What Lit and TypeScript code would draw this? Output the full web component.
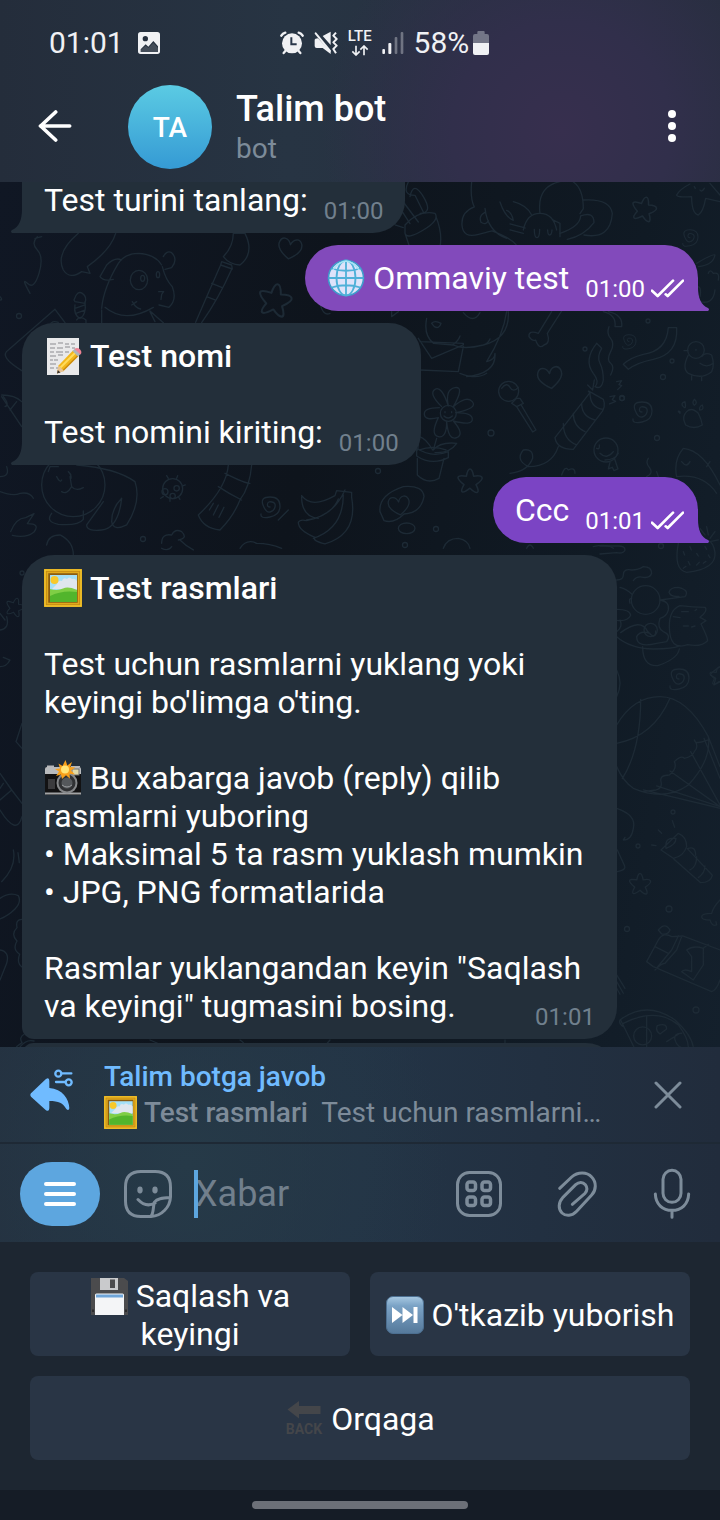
import { LitElement, html, svg, css, nothing } from "lit";
import { customElement, property } from "lit/decorators.js";

/* ---------- emoji artwork ---------- */

const EMOJI: Record<string, unknown> = {
  globe: svg`
    <circle cx="19" cy="19" r="17.500" fill="#dfe3fa" stroke="#3f9ccb" stroke-width="1.600"/>
    <g fill="none" stroke="#4fb0d8" stroke-width="1.800">
      <ellipse cx="19" cy="19" rx="9.500" ry="17.500"/>
      <path d="M19 1.500V36.500M1.500 19H36.500M4.500 9.500Q19 14 33.500 9.500M4.500 28.500Q19 24 33.500 28.500"/>
    </g>
    <path d="M6 11Q11 3 19 2Q27 3 32 11" fill="none" stroke="#a6e6f5" stroke-width="1.400"/>`,
  memo: svg`
    <rect x="3" y="1" width="32" height="37" fill="#e9e9ea"/>
    <path d="M6 7h6m2-1h5m2 1h4m2 0h4M6 11h5m2 0h6m2-1h5m2 1h3M6 15h4m2 0h7m2 0h4M6 19h6m2-1h5M6 23h3m1 0h4M6 27h6M6 31h4m2 0h2" stroke="#8b8b90" stroke-width="1.200" fill="none"/>
    <path d="M13 36.500l1.500-8L29 13.500l5.500 5.500L20 33.500z" fill="#f2b71c"/>
    <path d="M16.500 30.500L31 16" stroke="#ffdb5c" stroke-width="2"/>
    <path d="M18.500 34L34 18.500" stroke="#c98a10" stroke-width="1.200"/>
    <path d="M13 36.500l1.500-8 5.500 5.500z" fill="#e7c394"/>
    <path d="M13 36.500l.8-3.500 2.700 2.500z" fill="#3b3431"/>
    <path d="M28.500 14l2.500-2.500 5.500 5.500-2.500 2.500z" fill="#aeb4ba"/>
    <path d="M30.500 12q3-2 5.500.5t.5 5z" fill="#ef8293"/>`,
  picture: svg`
    <rect width="38" height="38" fill="#c58a12"/>
    <rect x="1" y="1" width="36" height="36" fill="none" stroke="#f5c82e" stroke-width="1.500"/>
    <rect x="4" y="4" width="30" height="30" fill="#8a5c11"/>
    <rect x="3.500" y="3.500" width="31" height="31" fill="none" stroke="#e0a91c" stroke-width="1.500"/>
    <rect x="6" y="6" width="27" height="27" fill="#a5e0f7"/>
    <path d="M13 15q1-4 5-3 1-4 5-2 2-3 5 0 3-1 5 2v8H8z" fill="#dfe6ee"/>
    <circle cx="10.500" cy="11" r="4" fill="#f8c92a"/>
    <path d="M6 20q8 2 13-.5t14 1.500v12H6z" fill="#7fce45"/>
    <path d="M6 27q12-6 27-4v10H6z" fill="#52b52c"/>`,
  camera: svg`
    <path d="M3 9V6.500h7V9M27 9V7h9v3" fill="#b8b8ba"/>
    <rect x="1" y="8" width="36" height="28" rx="2" fill="#121213"/>
    <path d="M1 15V10q0-2 2-2h32q2 0 2 2v5z" fill="#b9bbbd"/>
    <path d="M4 20h7v10H4z" fill="#3b3b3d"/>
    <path d="M1 34.500h36" stroke="#a2a4a6" stroke-width="2"/>
    <rect x="28" y="10" width="7" height="6" fill="#e0d9a8" stroke="#717171"/>
    <circle cx="23" cy="24" r="10.500" fill="#86888a"/>
    <circle cx="23" cy="24" r="8.500" fill="#303133"/>
    <circle cx="23" cy="24" r="5.500" fill="#55585b"/>
    <path d="M18 26q5 4 10 0" stroke="#9a9da0" fill="none"/>
    <path d="M21.500 1l1.800 5.500L28 3l-1.700 5 5 .5-4.300 3 4 4-5.500-.8.5 5-4-3.500L18 20l-1-4.500-5 1.500 3-4.500-4-2.500 5-.5-1.500-5 4 2.500z" fill="#f8a01b"/>
    <circle cx="21" cy="10.500" r="4" fill="#ffe476"/>`,
  floppy: svg`
    <path d="M1 1h33l4 3v34H1z" fill="#4b4b4d"/>
    <rect x="10" y="1" width="18" height="12" fill="#c9cacc"/>
    <rect x="20" y="2.500" width="5" height="8.500" fill="#4b4b4d"/>
    <path d="M5 38V18q0-1.500 1.500-1.500h26Q34 16.500 34 18v20z" fill="#f4f5f7"/>
    <path d="M6 19h27" stroke="#6fa5d8" stroke-width="3"/>
    <path d="M3 32.500v2.500M36 32.500v2.500" stroke="#222" stroke-width="1.500"/>`,
  next: svg`
    <defs><linearGradient id="n" x2="0" y2="1"><stop stop-color="#a8c9e2"/><stop offset=".25" stop-color="#7ba3c6"/><stop offset="1" stop-color="#55799b"/></linearGradient></defs>
    <rect x=".5" y=".5" width="37" height="37" rx="6.500" fill="url(#n)" stroke="#4c6f91"/>
    <path d="M6 11l10.500 8L6 27zM16.500 11L27 19l-10.500 8zM27.500 11h4v16h-4z" fill="#fff"/>`,
  back: svg`
    <path d="M2.500 9.500L14 1v5h21.500v8H14v4.500z" fill="#44464a"/>
    <text x="19" y="34" text-anchor="middle" font-family="Roboto, sans-serif" font-weight="700" font-size="14" fill="#44464a">BACK</text>`,
};

const emoji = (name: string) =>
  html`<svg class="emoji" viewBox="0 0 38 38" aria-hidden="true">${EMOJI[name]}</svg>`;

const sharedEmoji = css`
  .emoji {
    display: inline-block;
    width: 38px;
    height: 38px;
    vertical-align: top;
    overflow: visible;
  }
`;

/* ---------- wallpaper ---------- */

const star = (x: number, y: number, s: number, r = 0) => svg`
  <path transform="translate(${x} ${y}) rotate(${r}) scale(${s})"
    d="M0-10Q2-10 3-4 9-5 10-3T5 3Q8 9 6 9.500T0 6Q-5 10-6.500 9T-5 3Q-10-1-10-3T-3-4Q-2-10 0-10Z"/>`;
const heart = (x: number, y: number, s: number, r = 0) => svg`
  <path transform="translate(${x} ${y}) rotate(${r}) scale(${s})"
    d="M0 10C-8 5-12 0-10-5S-2-9 0-3C2-9 8-10 10-5S8 5 0 10Z"/>`;
const spiral = (x: number, y: number, s: number, r = 0) => svg`
  <path transform="translate(${x} ${y}) rotate(${r}) scale(${s})"
    d="M0 1Q-3 1-2.500-2T2-4 5 1 0 6-7-1 0-9 10 0 0 11-9 8"/>`;
const ring = (x: number, y: number, r = 2.5) => svg`<circle cx=${x} cy=${y} r=${r} />`;

const wallpaper = svg`
  <g fill="none" stroke-width="1.300" stroke-linecap="round" stroke-linejoin="round">
    ${star(644, 209, 1.2, 12)} ${star(275, 300, 1.6, 10)} ${star(470, 481, 1.2)}
    ${star(640, 884, 1.05)} ${star(15, 607, 0.9, 15)} ${star(719, 676, 0.9)}
    ${heart(290, 248, 1.1, 8)} ${heart(550, 377, 1.15, -8)} ${heart(399, 505, 1, -8)}
    ${spiral(690, 237, 0.8)} ${spiral(629, 341, 0.7)} ${spiral(642, 411, 1)} ${spiral(270, 506, 1)} ${spiral(679, 678, 1)}
    ${ring(19, 316)} ${ring(491, 433, 3)} ${ring(648, 321, 2)} ${ring(585, 349, 2)} ${ring(663, 377)} ${ring(672, 361, 2)}
    ${ring(622, 398)} ${ring(657, 438)} ${ring(378, 471)} ${ring(436, 529)} ${ring(405, 545)} ${ring(143, 539)} ${ring(22, 573, 2)}
    ${ring(661, 546)} ${ring(673, 812, 2)} ${ring(638, 846, 2)} ${ring(669, 909, 3)} ${ring(627, 929)} ${ring(696, 1010, 3)}

    <g transform="translate(360 0) scale(.3333)" stroke-width="4">
      <path d="M145 546q-20 40 20 40l25 50m-60-30l45 60m-60-50l35 55M150 590q10-50 40 0t-10 50M105 675l25 8M135 675q40-45 90-35 15 20-35 50t-55 10zM135 700l20 60M228 650q20 50 12 90"/>
      <path d="M335 546q-5 50 8 75-40 15-37 55t50 27 40-10q80 30 80 60M375 625q8 70 65 90M375 637q-20 10-12 30 15 10 22-5M420 606q15 45 40 55-5-25-20-30M460 605q40 10 55 40M540 640q-10-80 60-95M640 546q30 20 30 80l-10 15M670 600q80-5 87 40-5 80-85 65M600 700q60-20 62-52 40-15 40 20-30 40-80 50"/>
      <path d="M490 690q10-50 50-50t50 50M450 672l45 12M450 690l40 10M580 660l20 10 0 40M523 688q0 25 8 25t8-25M563 690q0 15 6 15t7-15"/>
      <path d="M990 552q-30 15-40 33 0 8 45 5 0 50 20 55 15-10 22-50l43 10M1003 560l3 5M1020 570q5 8 13-5M1050 550l30 35"/>
    </g>

    <g transform="translate(0 230) scale(.3333)" stroke-width="4">
      <path d="M112 20q-20 20 0 40t5 70-35 30 8 30M105 25l20-5"/>
      <path d="M235 10q-70 60-45 110 20 30 55 5l25 5-8-20q70-50 85-100"/>
      <path d="M305 235q5-60 50-135 20-30 60-30 50 2 70 35M490 80q10-20 25-12 20 20 0 45l-20 5M365 90q-20-10-45 15l-20 35q10 15 40 8M487 110q10 40 30 60 15 40-10 62l-30-7M476 185h15l-6 8-2 15M397 215q10 20 25 22M395 225l15-10M315 232q60 50 145 0M305 240v40M450 245l15 30M490 278l-40-35"/>
      <ellipse cx="417" cy="150" rx="26" ry="29"/><ellipse cx="428" cy="145" rx="6" ry="9"/><ellipse cx="474" cy="134" rx="5" ry="9"/>
      <path d="M670 80q30-30 30-70h35q30 60-15 95-30 0-50-25zM665 95l30 10 2 12-35-12zM662 105q-40 90-75 172M695 118q-40 90-90 160M635 160l30 12M620 200l25 10"/>
      <path d="M222 210q10-30 25-20t8 30l-30-5zM225 225q-5 30 15 40 20-10 15-50M225 235l30-10M228 250l28-10M230 270q10-15 28 0v10"/>
      <path d="M165 238L25 360q-15 10-5 25t50 40M165 238l30 40M150 285q5-15 25-8M5 500l60 90M5 495q40 0 60 20M10 500q20 25 5 30M50 515l-20 25"/>
      <circle cx="220" cy="765" r="95"/>
      <path d="M145 725l5-15 25 0M170 740q10 20 15 10M205 725q10 8 8 20M210 740l5 30M185 785q15 10 30-15 12 15 35 3M230 705q120 10 175 50 20 60-25 130-40 20-45-10 0-40 30-70-10 90-60 95-45 5-45-15l50-70M155 850q-20 25 20 33 60 5 75-15v-25"/>
      <path d="M0 740q30 0 20-30M0 785q40 15 60 5 30-5 40 15M32 905q15-40 45-42l25-12-20 30q40 0 20 25-25 20-65 10"/>
      <circle cx="518" cy="776" r="30"/><circle cx="495" cy="785" r="9"/><circle cx="530" cy="775" r="8"/><circle cx="518" cy="798" r="8"/>
      <path d="M505 745l-5-8M530 745l3-8M548 768l8-3M490 800l-8 5M510 806v8M535 800l5 8"/>
      <path d="M685 705q-5 70-90 150 15 40 65 45 40-40 60-90 30-40 35-105M675 730q60 30 75 30M655 770q30 20 70 40M640 820l-12 20M655 825l-15 30M672 832l-15 30"/>
      <path d="M905 797q30 40 100 0l5-15 45 5v15q20 110-80 140-40-10-30-20-50-20-50-45 5-10 25-5 75-15 95-65M920 870q80-10 115-90M940 925q90-30 90-130M905 800q0 60 50 65"/>
      <path d="M140 945q5-30 40-30 40 20 40 60M485 940q0-30 30-25 10-20 30-10 20 20-10 25M515 950q-10 15-30 5M540 930q20 20 40 30M720 955q20-30 50-15 40 0 75 15"/>
      <path d="M835 870l30-30M960 220q10 40 30 30M0 200q10 10 0 10"/>
    </g>

    <g transform="translate(360 230) scale(.3333)" stroke-width="4">
      <path d="M200 265q-10 50 20 75l60 5q30 15 90 0 80-20 75-100M215 280q10-10 28 0-5 18-20 10zM300 318q-5 15-20 25M370 345q15-5 20-18M310 248q30 35 50 0M440 245q-10 70-60 150 25-5 25-25 5 60-85 70M175 325l40 60 95-40v-5l-130-5M180 420l115 5 15-75M300 430q50 20 80 0M95 245v15l20-15"/>
      <path d="M575 245l-40 65q-30-10-28 10 10 15 20 10 10 30 25 15 20-5 10-35l45-70M730 245q40 10 35 45h20q5-35-40-45"/>
      <path d="M710 340q-40 50-10 90 20 25 5 40 20 10 25-20 0-30-10-50-10-20 5-45zM747 290q-8 20 5 35t0 40 0 35 0 35M925 293h25q5 80-70 95-50 10-75 30l-15-15q20-20 60-30 70-10 75-80z"/>
      <circle cx="1008" cy="360" r="25"/><path d="M985 375q-20 40 0 55 40 20 70-5 10-20 0-50-20-10-30 5M1020 400q20 15 40 0M995 438v12M1025 440v12M972 362h12M1008 358v3"/>
      <ellipse cx="446" cy="484" rx="30" ry="30"/><path d="M425 475q15-20 25-3t25 0M470 505l-15 15 15 10 20-10-10-15zM470 530l48 76 10-6-45-76"/>
      <circle cx="265" cy="550" r="24"/><path d="M245 530q-40-40-20-52t40 50q-10-50 20-55t-5 57q40-35 57-15t-50 33q50 0 50 20t-57 5q35 40 10 50t-30-48q0 50-25 45t0-57q-40 10-42-10t45-20M255 545v3M275 545v3M252 558q12 12 25 0M230 625l-10 35q20-25 70-20-20 30-65 28M218 660q-20-35-40-40l-5 40"/>
      <path d="M170 655q45 30 95 10v18q-50 25-95-5zM172 685v50q30 30 65 10l15-60M178 660q40-15 80 0"/>
      <path d="M690 488q-20-15 40 20 10 25-10 45l-80 105q-50 0-55-35zM690 488q0 45 40 50M665 520q0 40 40 50M640 550q0 40 35 55M610 580q0 50 40 65M595 650q-20 60-90 60-40-20-15-50 30-5 28 25-15 40-68 45"/>
      <path d="M683 465l15 15 5-30M770 455l15-3-8 12 8 3-12 12M750 500l15-3-8 12 10 5-18 8"/><circle cx="786" cy="505" r="7"/>
      <path d="M975 580q-10-20 5-35t35 5q10 20 12 35-25 15-50 0zM960 545q-10-5 0 5zM975 515q-15 5-5 15t5-15zM1003 508q-8 10 0 18 12-8 0-18zM1027 525q-10 5-8 15 15 0 8-15z"/>
      <circle cx="738" cy="660" r="36"/><path d="M710 655q10 5 8-10M720 670q20 20 40-5M735 690q30 0 40-20M750 697l-5 20 12-5 5 10 12-5-10-30"/>
      <path d="M865 685q-10 15 5 30 10 15-10 25M890 725q5 15 5 15M950 740q-10-50 20-85 60 5 110 110M965 695q15 20 25 0M950 740q80-10 120 50M1040 710l10-15"/>
      <path d="M60 845q-5-50 70-75 60-5 62 30-10 50-60 52-30 30-60 20z"/><ellipse cx="140" cy="895" rx="25" ry="16"/>
      <path d="M250 955q10-30 45-30 30 5 35 30M605 735q10-30 20-15 20-10 20 10M500 955q10-20 20 0M700 950q40-10 60 5M1020 200q5-25-5-30M1010 100q50-30 55-25-5 30-50 35M1045 130q5-15 15 0 20-5 15 20"/>
      <path d="M1020 215q40 10 45-35M1020 895l15 20M1040 890l5 25M1065 905l-15 20M1075 930l-25 5"/>
    </g>

    <g transform="translate(600 540) scale(.3333)" stroke-width="4">
      <path d="M50 120q20 0 20-15 0-20 25-15 20 0 35-10 25 0 25 20-5 15-25 12-20-5-30 10M0 18h55q20 0 20 12-5 12-25 8L0 42"/>
      <circle cx="137" cy="180" r="43"/><path d="M60 142q20 5 35 20M90 190q-5-15 5-15M180 180l75-10q15-20-20-28-25 0-28 15 5 15 30 12M180 180q30 5 25 30-5 20-25 25-10 30 10 40 25 10 10 30l-30 5q-60 15-60-20 10-20 40-10M50 208q40 0 42 18-10 20-42 15M60 240q10 20-10 35M62 278q60-45 80-5 25 30 25 0M50 290q40 35 110 37 60 0 80-10M128 320q0 60 45 57 60-20 65-50"/>
      <circle cx="152" cy="270" r="20"/><path d="M240 197q40 5 75 5 10 10-15 30l18 10-15 10q20 40 20 50-20 20-60 12-55 20-55-55 0-50 32-62zM220 230l20 3M245 215h20M250 258h15M285 258l-10 3M285 212l5-4"/>
      <path d="M235 10q-15 80 25 87 90-10 85-60-5-30-20-35M250 35l4 10M270 20l4 10M290 40l5 8M315 20l5 8M325 45l5 8M265 65l5 10M290 75l8-8M310 70l8-6M250 85l8-6"/>
      <path d="M50 555q50-85 130-85t145 120q10 70-60 145-70 50-165 10-30-20-50-65M122 478q0 150-55 238M50 610q110-20 160-135M325 600q-40 15-42 0 15 20 0 35-5 15-30 20-10-10-30 10 10 20-15 40-30 0-25 20 5 20-15 25l-40 5M210 693l150 107M170 738l190 62M130 750l230 55M272 635l88 160M312 595l48 120M325 590l35 90"/>
      <path d="M50 805q60 20 50 60-5 35-30 35l5-8M52 930l22 48q5 12-22 17"/>
      <path d="M183 930l52-50q25 10 25 40-10 30-40 35zM198 925q-5-35 30-30 0 20-30 30zM222 958l80 70q30 0 35-22l-75-80q25-10 25 20M290 950q0 30-20 40M315 978q0 20-20 35M217 842l7 20M175 870l10 10M155 915l13 2"/>
      <path d="M175 1200q15-25 40-10l33-2 112 42M175 1200l-35 65 20 15 175 75q15-5 25-35M165 1290l50-60 20-42M165 1290q20-20 30-20l35-40 15-40M165 1220l40 20M260 1230q20-15 50-5v50l-30 45-35-25q10-10 30 0v-45zM310 1225l15-12"/>
      <path d="M175 1170q20-25 35 0-5 15-25 12zM360 1080q-20 20-25 40-30 0-30 10t25 10q5 20 20 15l-2-10M360 380q-30 20-28 25l15 10-5 20 18-10"/>
      <path d="M60 1440q80-60 165 0 50 45 55 82M62 1440l40 82M70 1450q100-50 165 5 30 40 30 67M60 1440q-5 10 10 20M140 1430v92M180 1455q20-5 20 12l-20 15q-15-10-8-25zM245 1480q-25 0-20 20t25 25M200 1505l40-25"/>
      <circle cx="128" cy="1488" r="27"/><path d="M50 1305l25 40M50 1325l20 35M50 1345l10 18M50 390q20 40 0 80"/>
    </g>

    <g transform="translate(0 780) scale(.3333)" stroke-width="4">
      <path d="M0 60l35-30L0-20M10 10l-10 15M0 90q50 80 66 20M35 30l31 40M40 210q10 50-35 95M54 218l4 30M0 355q30-20 55-8 10 20-10 40t-45 30M66 418q-20 0-15 25-20 20 0 40-15 25 8 40-10 25 7 38M0 510q30 5 20 40L0 600M50 800l16-12q-10-15 6-25"/>
      <path d="M0-450q30-5 20-40M0-340q20 0 30-20l-20-8M66-170l-18 55 18 20M0-500l15 20"/>
    </g>
    <path d="M150 1040l14 6M240 1040q6 4 4 7M330 1040l-6 7M505 1040v7M20 1047q6-8 14-6"/>
  </g>`;

/* ---------- message bubble ---------- */

@customElement("chat-message")
export class ChatMessage extends LitElement {
  @property({ type: Boolean, reflect: true }) out = false;
  @property() time = "";
  @property() shape = "tail";

  static styles = [
    sharedEmoji,
    css`
      :host {
        display: block;
        max-width: 88%;
        align-self: flex-start;
      }
      :host([out]) {
        align-self: flex-end;
      }
      .bubble {
        position: relative;
        padding: 14px 22px;
        border-radius: 32px;
        background: #232f3a;
        color: #fff;
        font-size: 32px;
        line-height: 38px;
      }
      .tail {
        border-bottom-left-radius: 0;
      }
      .stacked {
        border-bottom-left-radius: 12px;
      }
      .continued {
        padding-top: 90px;
        border-bottom-left-radius: 0;
      }
      .out {
        padding-right: 14px;
        border-radius: 33px 33px 0 33px;
        background: var(--out-color, #824abb);
      }
      .text {
        white-space: pre-line;
      }
      .meta {
        float: right;
        display: flex;
        align-items: center;
        gap: 6px;
        margin: 16px 0 -6px 16px;
        font-size: 24px;
        line-height: 28px;
        color: #71808d;
      }
      .out .meta {
        color: #fff;
      }
      .ticks {
        width: 33px;
        height: 20px;
      }
      .corner {
        position: absolute;
        bottom: 0;
        left: -11px;
        width: 12px;
        height: 24px;
        fill: #232f3a;
      }
      .out .corner {
        left: auto;
        right: -11px;
        fill: var(--out-color, #824abb);
        transform: scaleX(-1);
      }
    `,
  ];

  render() {
    const hasTail = this.shape !== "stacked";
    return html`<div class="bubble ${this.shape} ${this.out ? "out" : ""}">
      <div class="text"><slot></slot><span class="meta"><time>${this.time}</time>${this.out
        ? html`<svg class="ticks" viewBox="0 0 99 60" role="img" aria-label="Read">
            <path d="M3 35L20 51L66 5M44 46L50 51L96 5" fill="none" stroke="#fff" stroke-width="8" stroke-linecap="round" stroke-linejoin="round"/>
          </svg>`
        : nothing}</span></div>
      ${hasTail
        ? html`<svg class="corner" viewBox="0 0 12 24" aria-hidden="true"><path d="M11 0C11 11 8 18 1 21Q-1 22.500 1 24H12V0z"/></svg>`
        : nothing}
    </div>`;
  }
}

/* ---------- page ---------- */

@customElement("app-root")
export class AppRoot extends LitElement {
  static styles = [
    sharedEmoji,
    css`
      :host {
        display: flex;
        flex-direction: column;
        height: 100vh;
        overflow: hidden;
        background: #1d2631;
        color: #fff;
        font-family: Roboto, sans-serif;
      }
      button {
        padding: 0;
        border: 0;
        background: none;
        color: inherit;
        font: inherit;
        cursor: pointer;
      }
      svg {
        display: block;
        flex: none;
      }
      .top {
        background:
          radial-gradient(circle at 78% 72%, #372f4e 0, #312f4b 110px, rgba(42, 47, 68, 0) 240px),
          linear-gradient(90deg, #242d3b, #273443 40%, #262e3d);
      }
      .status {
        display: flex;
        align-items: center;
        gap: 14px;
        height: 85px;
        padding-left: 49px;
        font-size: 30px;
        color: #f0f1f4;
      }
      .indicators {
        display: flex;
        align-items: center;
        gap: 10px;
        margin-left: 106px;
      }
      .lte {
        display: flex;
        flex-direction: column;
        align-items: center;
        gap: 3px;
        font-size: 15px;
        font-weight: 500;
        line-height: 12px;
      }
      .charge {
        display: flex;
        align-items: center;
        gap: 4px;
      }
      .bar {
        display: flex;
        align-items: center;
        height: 84px;
        padding: 0 38px;
        margin-bottom: 13px;
      }
      .avatar {
        display: grid;
        place-items: center;
        width: 84px;
        height: 84px;
        margin: 0 24px 0 56px;
        border-radius: 50%;
        background: linear-gradient(#5bcbe3, #359ad4);
        font-size: 28px;
        font-weight: 500;
      }
      .who {
        flex: 1;
        padding-top: 2px;
      }
      h1 {
        margin: 0;
        font-size: 36px;
        font-weight: 500;
        line-height: 42px;
      }
      .kind {
        margin: 0;
        font-size: 28px;
        line-height: 38px;
        color: #7d8b99;
      }
      .chat {
        position: relative;
        flex: 1;
        min-height: 0;
        overflow: hidden;
        display: flex;
        flex-direction: column;
        justify-content: flex-end;
        background: linear-gradient(100deg, #101724, #0e141c 40%, #101a24 75%, #14202c);
      }
      .doodles {
        position: absolute;
        inset: 0;
        width: 100%;
        height: 100%;
        stroke: #1d2a35;
      }
      .messages {
        position: relative;
        display: flex;
        flex-direction: column;
        gap: 12px;
        padding: 0 22px;
        margin-bottom: -58px;
      }
      .latest {
        --out-color: #7b44c4;
      }
      .stack {
        display: flex;
        flex-direction: column;
        gap: 4px;
      }
      .following {
        width: 88%;
        height: 62px;
        border-radius: 12px 32px 32px 12px;
        background: #232f3a;
      }
      b {
        font-weight: 500;
      }
      .composer {
        background:
          radial-gradient(circle at 26% 60%, #263a48 0, rgba(38, 54, 70, 0) 260px),
          linear-gradient(90deg, #243140, #233446 50%, #212c3c);
      }
      .reply {
        display: flex;
        align-items: center;
        height: 95px;
        padding: 0 38px 0 30px;
        border-bottom: 2px solid #1e2935;
      }
      .arrow {
        margin-bottom: 8px;
      }
      .quote {
        flex: 1;
        min-width: 0;
        margin-left: 31px;
        font-size: 28px;
        line-height: 36px;
        color: #7d8b99;
        white-space: pre;
        overflow: hidden;
      }
      .quote p {
        margin: 0;
      }
      .quote .author {
        color: #70bbff;
        font-weight: 500;
      }
      .quote .emoji {
        width: 33px;
        height: 33px;
        margin-top: 1px;
      }
      .entry {
        display: flex;
        align-items: center;
        box-sizing: border-box;
        height: 98px;
        padding: 2px 28px 0 20px;
      }
      .menu {
        display: grid;
        place-items: center;
        width: 80px;
        height: 64px;
        border-radius: 32px;
        background: #5da6df;
      }
      .sticker {
        margin: 0 22px 0 24px;
      }
      .field {
        position: relative;
        flex: 1;
        min-width: 0;
      }
      .field input {
        display: block;
        box-sizing: border-box;
        width: 100%;
        height: 48px;
        padding: 0 0 0 1px;
        border: 0;
        outline: none;
        background: none;
        color: #fff;
        font: 36px Roboto, sans-serif;
      }
      .field input::placeholder {
        color: #717f8c;
        opacity: 1;
      }
      .caret {
        position: absolute;
        left: 0;
        top: 0;
        width: 4px;
        height: 48px;
        background: #5da6df;
      }
      .tools {
        display: flex;
        align-items: center;
        gap: 54px;
      }
      .line {
        fill: none;
        stroke: #7d8c9a;
        stroke-linecap: round;
        stroke-linejoin: round;
      }
      .keyboard {
        display: grid;
        grid-template-columns: 1fr 1fr;
        gap: 20px;
        padding: 30px;
      }
      .key {
        min-height: 84px;
        padding: 5px 10px 3px;
        border-radius: 8px;
        background: #293545;
        font-size: 32px;
        line-height: 38px;
      }
      .wide {
        grid-column: 1 / -1;
      }
      .nav {
        display: grid;
        place-items: center;
        height: 30px;
        background: #151c26;
      }
      .pill {
        width: 30%;
        height: 8px;
        border-radius: 4px;
        background: #6c7078;
      }
    `,
  ];

  render() {
    return html`
      <header class="top">
        <div class="status">
          <time>01:01</time>
          <svg width="22" height="22" viewBox="0 0 66 66" aria-hidden="true">
            <path fill="#f0f1f4" fill-rule="evenodd" d="M8 0H58Q66 0 66 8V58Q66 66 58 66H8Q0 66 0 58V8Q0 0 8 0ZM8 52V60H60V43L46 27L31 44L23 37ZM22 12A8 8 0 1 0 22 28A8 8 0 1 0 22 12Z"/>
            <path fill="#f0f1f4" d="M8 54L23 41L31 48L46 32L60 48V62H8Z" opacity=".15"/>
          </svg>
          <div class="indicators">
            <svg width="24" height="24" viewBox="16 24 72 72" aria-hidden="true">
              <g fill="none" stroke="#f0f1f4" stroke-width="7" stroke-linecap="round"><path d="M20 38Q24 31 32 29M72 29Q80 31 84 38M32 84L27 90M72 84L77 90"/></g>
              <circle cx="52" cy="61" r="30" fill="#f0f1f4"/>
              <path d="M50 43V64H66" fill="none" stroke="#29374a" stroke-width="6"/>
            </svg>
            <svg width="24" height="24" viewBox="118 24 72 72" aria-hidden="true">
              <path d="M144 39L168 26V66ZM120 50Q120 47 130 46L168 86V93L144 75H126Q120 75 120 69Z" fill="#f0f1f4"/>
              <path d="M123 31L166 84" stroke="#f0f1f4" stroke-width="6" stroke-linecap="round"/>
              <path d="M184 29L176 38L186 48L176 58L186 68L176 78L184 91" fill="none" stroke="#f0f1f4" stroke-width="6" stroke-linejoin="round"/>
            </svg>
            <div class="lte">
              <span>LTE</span>
              <svg width="18" height="11" viewBox="0 0 54 33" aria-hidden="true"><path d="M15 2V29M4 19L15 30L26 19M39 31V4M28 14L39 3L50 14" fill="none" stroke="#f0f1f4" stroke-width="5"/></svg>
            </div>
            <svg width="22" height="24" viewBox="0 0 66 72" fill="#f0f1f4" aria-hidden="true">
              <rect x="1" y="54" width="8" height="15" rx="3"/><rect x="19" y="36" width="9" height="33" rx="3"/>
              <g opacity=".35"><rect x="38" y="18" width="8" height="51" rx="3"/><rect x="56" y="3" width="8" height="66" rx="3"/></g>
            </svg>
            <div class="charge">
              <span>58%</span>
              <svg width="16" height="24" viewBox="0 0 48 72" aria-hidden="true">
                <path d="M13 9V3Q13 0 16 0H32Q35 0 35 3V9H42Q48 9 48 15V36H0V15Q0 9 6 9Z" fill="#737687"/>
                <path d="M0 36H48V66Q48 72 42 72H6Q0 72 0 66Z" fill="#f0f1f4"/>
              </svg>
            </div>
          </div>
        </div>
        <div class="bar">
          <button type="button" aria-label="Orqaga">
            <svg width="34" height="34" viewBox="0 0 102 102"><path d="M7 48H95M53 6L8 48L53 90" fill="none" stroke="#fff" stroke-width="11" stroke-linecap="round" stroke-linejoin="round"/></svg>
          </button>
          <div class="avatar">TA</div>
          <div class="who">
            <h1>Talim bot</h1>
            <p class="kind">bot</p>
          </div>
          <button type="button" aria-label="Menyu">
            <svg width="20" height="34" viewBox="0 0 20 34" fill="#fff"><circle cx="10" cy="4" r="4"/><circle cx="10" cy="16" r="4"/><circle cx="10" cy="28" r="4"/></svg>
          </button>
        </div>
      </header>

      <main class="chat">
        <svg class="doodles" viewBox="0 182 720 865" preserveAspectRatio="xMidYMid slice" aria-hidden="true">${wallpaper}</svg>
        <div class="messages">
          <chat-message time="01:00" shape="continued">Test turini tanlang:</chat-message>
          <chat-message out time="01:00">${emoji("globe")} Ommaviy test</chat-message>
          <chat-message time="01:00">${emoji("memo")} <b>Test nomi</b>${"\n\n"}Test nomini kiriting:</chat-message>
          <chat-message out class="latest" time="01:01">Ccc</chat-message>
          <div class="stack">
            <chat-message time="01:01" shape="stacked">${emoji("picture")} <b>Test rasmlari</b>${"\n\n"}Test uchun rasmlarni yuklang yoki keyingi bo'limga o'ting.${"\n\n"}${emoji("camera")} Bu xabarga javob (reply) qilib rasmlarni yuboring${"\n"}• Maksimal 5 ta rasm yuklash mumkin${"\n"}• JPG, PNG formatlarida${"\n\n"}Rasmlar yuklangandan keyin "Saqlash va keyingi" tugmasini bosing.</chat-message>
            <div class="following"></div>
          </div>
        </div>
      </main>

      <section class="composer">
        <div class="reply">
          <svg class="arrow" width="43" height="43" viewBox="89 114 129 129" aria-hidden="true">
            <path d="M92 187L136 145Q147 137 147 150V171C186 174 206 203 207 232Q205 241 198 234C188 216 175 210 147 210V232Q146 244 136 237L92 197Q88 192 92 187Z" fill="#70bbff"/>
            <g fill="none" stroke="#70bbff" stroke-width="7" stroke-linecap="round"><circle cx="174" cy="128" r="9"/><circle cx="205" cy="154" r="9"/><path d="M186 127H213M167 153H194"/></g>
          </svg>
          <div class="quote"><p class="author">Talim botga javob</p><p>${emoji("picture")} <b>Test rasmlari</b>  Test uchun rasmlarni…</p></div>
          <button type="button" aria-label="Bekor qilish">
            <svg class="line" width="28" height="28" viewBox="0 0 28 28" stroke-width="3"><path d="M2 2L26 26M26 2L2 26"/></svg>
          </button>
        </div>
        <div class="entry">
          <button type="button" class="menu" aria-label="Buyruqlar">
            <svg width="32" height="26" viewBox="0 0 32 26"><path d="M2 3H30M2 13H30M2 23H30" stroke="#fff" stroke-width="4" stroke-linecap="round"/></svg>
          </button>
          <button type="button" class="sticker" aria-label="Stikerlar">
            <svg class="line" width="48" height="48" viewBox="0 0 48 48" stroke-width="3">
              <path d="M27 46.500H17Q1.500 46.500 1.500 31V17Q1.500 1.500 17 1.500H31Q46.500 1.500 46.500 17V27C46 37 38 46 27 46.500ZM46 27.500C38 28 33 28.500 30.500 32C29 35 30 43 27 46M14 29.500Q22 38 31 33"/>
              <ellipse cx="16" cy="20" rx="2.700" ry="3.400" fill="#7d8c9a" stroke="none"/><ellipse cx="31" cy="20" rx="2.700" ry="3.400" fill="#7d8c9a" stroke="none"/>
            </svg>
          </button>
          <div class="field">
            <input type="text" placeholder="Xabar" aria-label="Xabar" />
            <span class="caret"></span>
          </div>
          <div class="tools">
            <button type="button" aria-label="Klaviatura">
              <svg class="line" width="46" height="46" viewBox="0 0 46 46" stroke-width="3">
                <rect x="1.500" y="1.500" width="43" height="43" rx="12"/>
                <g stroke-width="3.500"><rect x="11" y="11" width="8.500" height="8.500" rx="2.500"/><rect x="26" y="11" width="8.500" height="8.500" rx="2.500"/><rect x="11" y="26" width="8.500" height="8.500" rx="2.500"/><rect x="26" y="26" width="8.500" height="8.500" rx="2.500"/></g>
              </svg>
            </button>
            <button type="button" aria-label="Biriktirish">
              <svg class="line" width="42" height="48" viewBox="586 419 126 144" stroke-width="9">
                <path d="M597 474L633 440C651 424 679 424 693 440C708 456 707 479 693 494L648 543C634 558 615 558 604 548C592 536 593 516 606 502L645 463C655 454 667 455 674 463C680 471 680 481 673 489L635 522"/>
              </svg>
            </button>
            <button type="button" aria-label="Ovozli xabar">
              <svg class="line" width="40" height="52" viewBox="876 414 120 156" stroke-width="9">
                <rect x="909" y="421" width="54" height="96" rx="27"/>
                <path d="M886 492C887 523 908 541 936 541S985 523 986 492M936 541V562"/>
              </svg>
            </button>
          </div>
        </div>
      </section>

      <div class="keyboard">
        <button type="button" class="key">${emoji("floppy")} Saqlash va keyingi</button>
        <button type="button" class="key">${emoji("next")} O'tkazib yuborish</button>
        <button type="button" class="key wide">${emoji("back")} Orqaga</button>
      </div>
      <div class="nav"><div class="pill"></div></div>
    `;
  }
}
